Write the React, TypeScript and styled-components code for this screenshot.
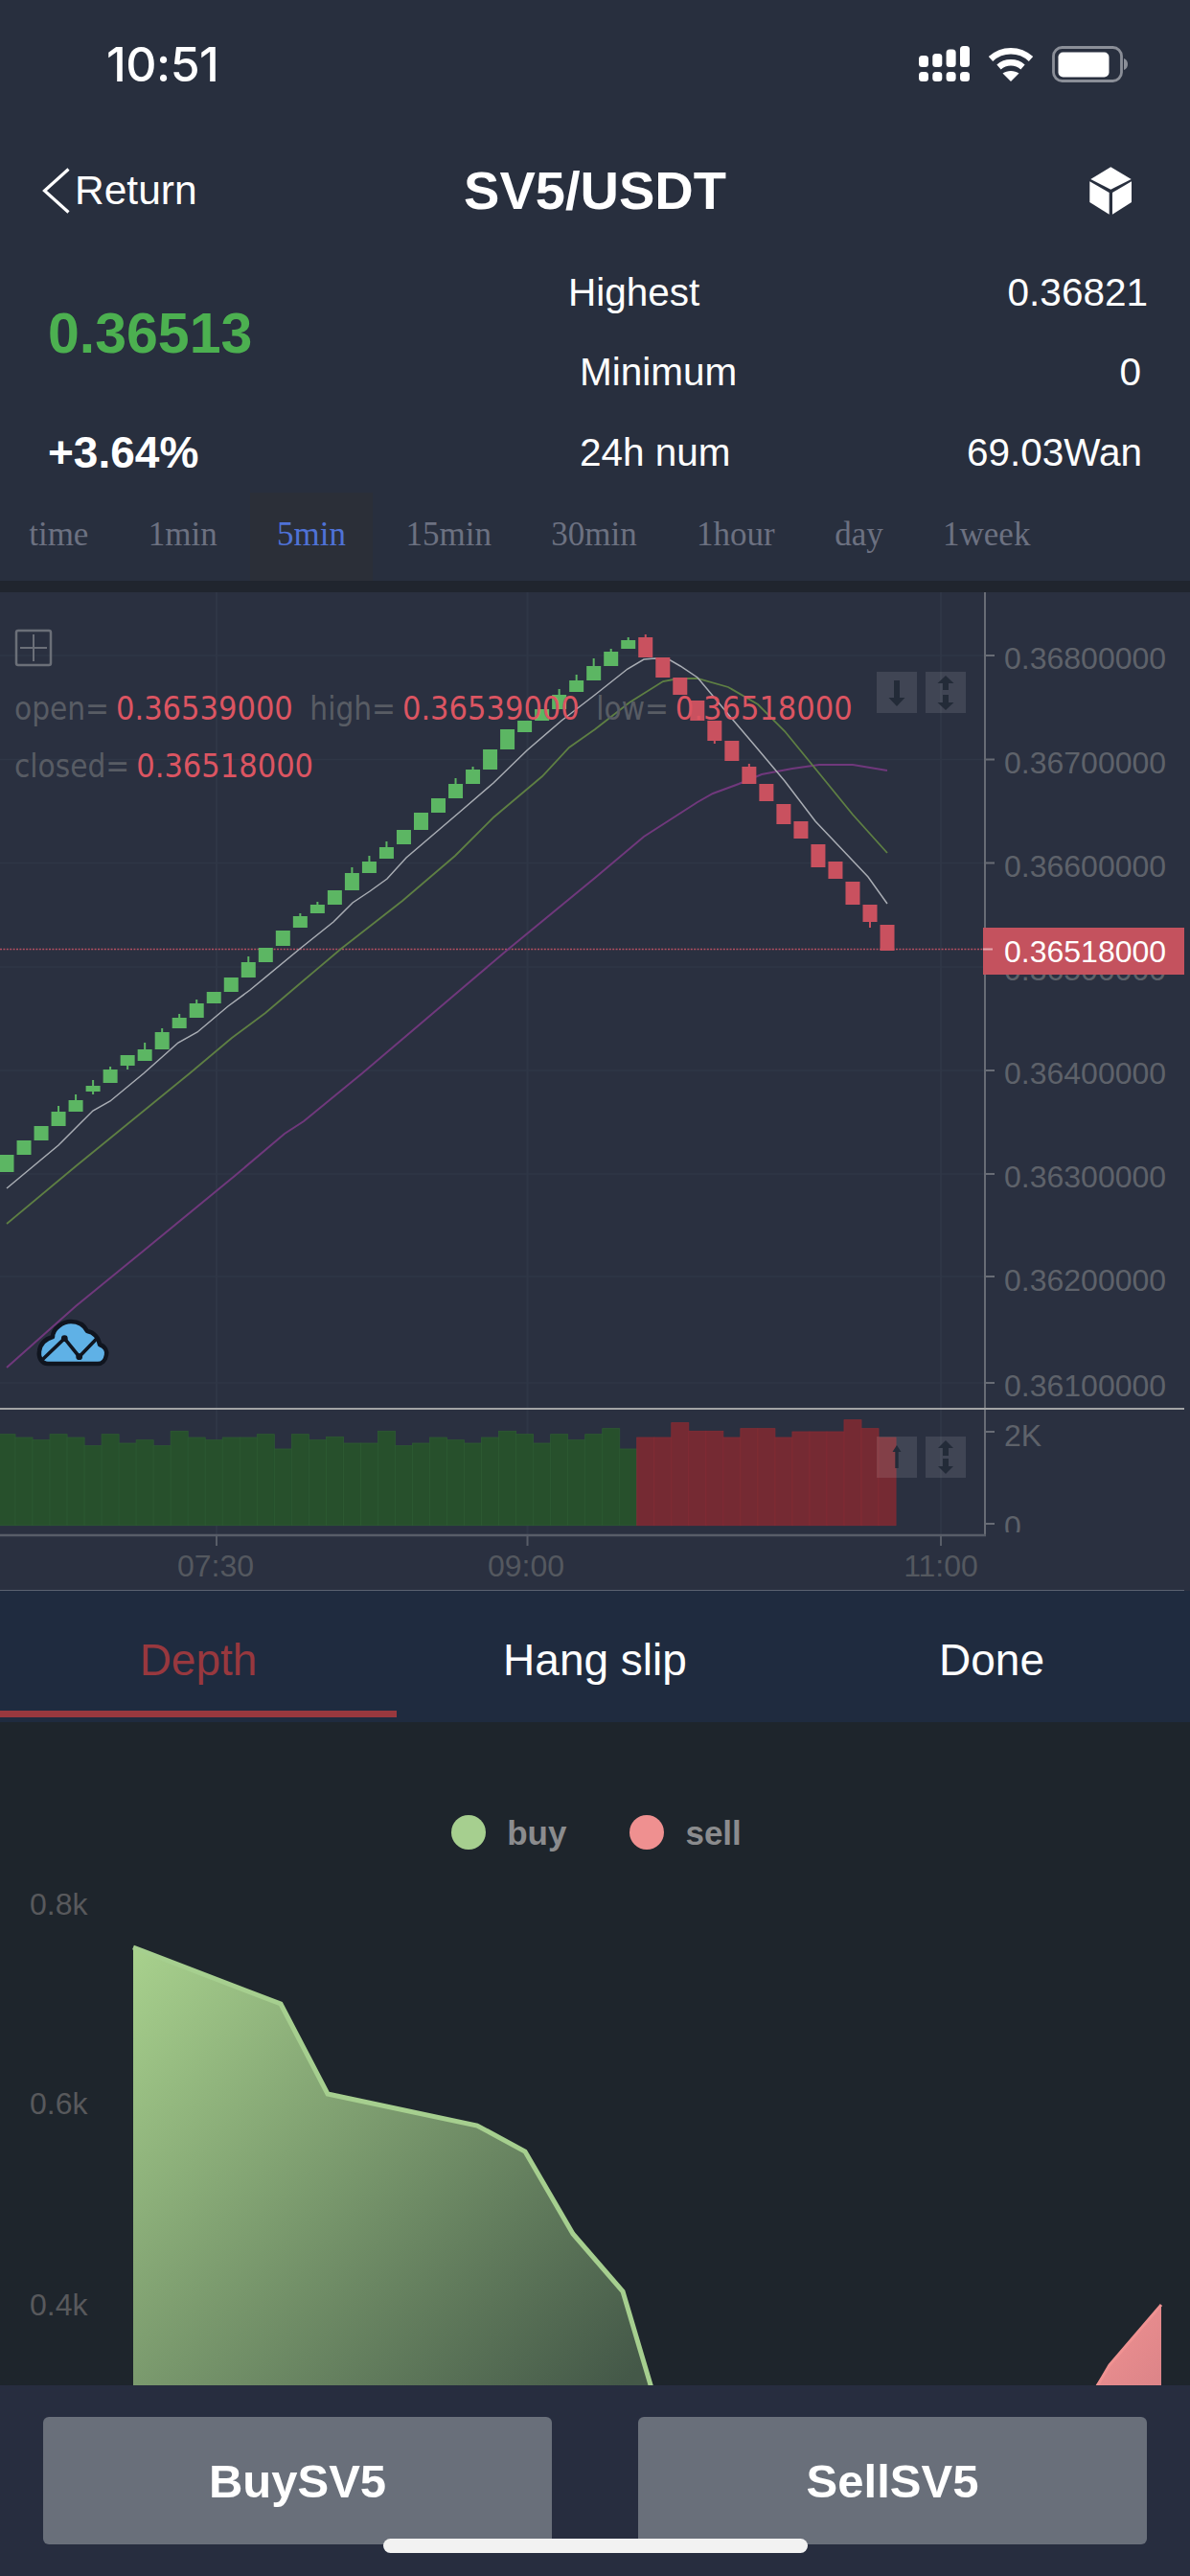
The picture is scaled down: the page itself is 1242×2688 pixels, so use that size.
import React from "react";
import styled, { createGlobalStyle } from "styled-components";

const GlobalStyle = createGlobalStyle`
  html, body { margin: 0; padding: 0; background: #282f3e; }
  * { box-sizing: border-box; }
`;

const Page = styled.div`
  position: relative;
  width: 1242px;
  height: 2688px;
  overflow: hidden;
  display: flex;
  flex-direction: column;
  background: #282f3e;
  color: #fff;
  font-family: "Liberation Sans", Arial, sans-serif;
`;

const Header = styled.header`
  height: 606px;
  flex: none;
  display: flex;
  flex-direction: column;
`;

const StatusBar = styled.div`
  height: 134px;
  flex: none;
  display: flex;
  align-items: center;
  justify-content: space-between;
  padding: 0 65px 0 111px;
`;

const Clock = styled.span`
  font-family: Inter, "Liberation Sans", sans-serif;
  font-size: 50px;
  font-weight: 500;
  letter-spacing: -0.5px;
`;

const StatusIcons = styled.div`
  display: flex;
  align-items: center;
  gap: 19px;
`;

const NavBar = styled.nav`
  height: 130px;
  flex: none;
  display: grid;
  grid-template-columns: 1fr auto 1fr;
  align-items: center;
`;

const BackLink = styled.a`
  display: flex;
  align-items: center;
  gap: 5px;
  padding-left: 44px;
  font-size: 42.5px;
  color: #fff;
`;

const Title = styled.h1`
  margin: 0 0 2px;
  font-size: 56px;
  font-weight: 700;
`;

const NavAction = styled.div`
  display: flex;
  justify-content: flex-end;
  padding-right: 59px;
`;

const Stats = styled.section`
  height: 250px;
  flex: none;
  display: flex;
`;

const Ticker = styled.div`
  width: 593px;
  flex: none;
  padding-left: 50px;
  display: flex;
  flex-direction: column;
`;

const LastPrice = styled.div`
  height: 167px;
  display: flex;
  align-items: center;
  font-size: 59px;
  font-weight: 700;
  color: #4cb050;
`;

const Change = styled.div`
  height: 81px;
  display: flex;
  align-items: center;
  font-size: 46px;
  font-weight: 700;
`;

const StatList = styled.div`
  flex: 1;
  display: flex;
  flex-direction: column;
  padding-right: 44px;
`;

const StatRow = styled.div<{ $indent: number; $inset: number }>`
  height: 83.4px;
  display: flex;
  align-items: center;
  justify-content: space-between;
  font-size: 40.5px;
  padding-left: ${(p) => p.$indent}px;
  padding-right: ${(p) => p.$inset}px;
`;

const PeriodStrip = styled.div`
  height: 92px;
  flex: none;
  display: flex;
  gap: 6px;
  padding-left: 2px;
`;

const Period = styled.div<{ $active?: boolean }>`
  display: flex;
  align-items: center;
  padding: 0 28.2px 4px;
  font-family: "Liberation Serif", "Times New Roman", serif;
  font-size: 35px;
  color: ${(p) => (p.$active ? "#4f72d6" : "#6c7181")};
  background: ${(p) => (p.$active ? "#2b2f38" : "transparent")};
`;

const Band = styled.div`
  height: 12px;
  flex: none;
  background: #20252e;
`;

const ChartPanel = styled.section`
  position: relative;
  height: 1042px;
  flex: none;
  background: #2a3040;
`;

const ChartSvg = styled.svg`
  display: block;
  width: 1242px;
  height: 1042px;
`;

const Readout = styled.div`
  position: absolute;
  left: 15px;
  top: 99px;
  display: flex;
  flex-direction: column;
  gap: 15px;
  font-family: "DejaVu Sans", Verdana, sans-serif;
  font-stretch: condensed;
  font-size: 34px;
  line-height: 45px;
  white-space: nowrap;
`;

const ReadoutRow = styled.div`
  display: flex;
`;

const ReadoutLabel = styled.span`
  color: #585c64;
  font-size: 33px;
  margin-right: 7px;
`;

const ReadoutValue = styled.span`
  color: #dc5562;
  margin-right: 17.5px;
`;

const TabBar = styled.div`
  height: 137px;
  flex: none;
  display: flex;
  padding-bottom: 5px;
  background: #1f2b3f;
`;

const Tab = styled.div<{ $active?: boolean }>`
  flex: 1;
  height: 132px;
  padding-top: 19px;
  display: flex;
  align-items: center;
  justify-content: center;
  font-size: 46px;
  color: ${(p) => (p.$active ? "#98383e" : "#fff")};
  border-bottom: 7px solid ${(p) => (p.$active ? "#98383e" : "transparent")};
`;

const DepthPanel = styled.section`
  height: 692px;
  flex: none;
  overflow: hidden;
  background: #1e252c;
  display: flex;
  flex-direction: column;
`;

const Legend = styled.div`
  flex: none;
  height: 36px;
  margin-top: 97px;
  display: flex;
  justify-content: center;
  align-items: center;
  gap: 66px;
  padding-left: 3px;
`;

const LegendItem = styled.div`
  display: flex;
  align-items: center;
  gap: 22px;
  font-size: 35px;
  font-weight: 700;
  line-height: 39px;
  color: #8b8c8e;
`;

const LegendDot = styled.span<{ $color: string }>`
  width: 36px;
  height: 36px;
  border-radius: 50%;
  background: ${(p) => p.$color};
`;

const DepthSvg = styled.svg`
  display: block;
  width: 1242px;
  height: 559px;
  flex: none;
`;

const ActionBar = styled.footer`
  flex: 1;
  display: flex;
  gap: 90px;
  padding: 33px 45px 0;
  background: #272d3f;
`;

const ActionButton = styled.button`
  flex: 1;
  height: 133px;
  border: 0;
  border-radius: 6px;
  background: #696f7a;
  color: #fff;
  font-family: inherit;
  font-size: 49px;
  font-weight: 700;
`;

const HomeIndicator = styled.div`
  position: absolute;
  left: 400px;
  top: 2649px;
  width: 443px;
  height: 15px;
  border-radius: 8px;
  background: #f2f2f2;
`;

const AXIS_FONT = '"Liberation Sans", Arial, sans-serif';

/* [bodyTop, bodyBottom, wickTop, wickBottom] */
type C = [number, number, number?, number?];
const candles: C[] = [
  [1205, 1223], [1190, 1205], [1175, 1190], [1160, 1175, 1154], [1148, 1160, 1142],
  [1133, 1139, 1127, 1142], [1116, 1130, 1113], [1101, 1112, undefined, 1116], [1095, 1107, 1088], [1077, 1095, 1073],
  [1062, 1073, 1058], [1047, 1062, 1043], [1035, 1047], [1020, 1035], [1004, 1020, 998],
  [989, 1004], [971, 987], [956, 968, 953], [944, 953, 941], [929, 944],
  [911, 929, 905], [899, 911, 893], [884, 896, 878], [866, 881], [848, 866],
  [833, 848], [818, 833, 812], [803, 818, 800], [782, 803], [761, 782],
  [752, 764], [740, 752], [725, 740, 719], [710, 722, 704], [695, 710, 687],
  [680, 695, 677], [668, 677, 665],
  [665, 686, 662], [686, 707], [707, 725], [731, 752], [752, 773, undefined, 776],
  [773, 794], [800, 818, 797], [818, 836], [839, 860], [857, 875],
  [881, 905], [899, 917], [920, 944], [944, 962, undefined, 968], [965, 992],
];
const FIRST_RED = 37;
const cx = (i: number) => 7 + 18.02 * i;

const white = "7,1240 61,1195 79,1177 97,1159 115,1149 150,1120 186,1088 206,1077 238,1050 261,1033 313,990 348,962 368,942 386,930 404,917 424,895 479,848 515,817 550,783 586,752 621,725 655,698 672,688 684,687 698,688 710,695 728,707 764,750 787,777 819,815 851,857 870,877 906,915 926,943";
const green = "7,1277 79,1217 198,1120 242,1083 277,1057 317,1023 356,990 420,940 475,893 515,853 566,810 594,780 621,761 657,733 692,711 708,708 728,708 760,717 791,735 819,763 855,807 890,850 926,890";
const purple = "7,1427 79,1363 150,1305 245,1227 297,1183 317,1170 378,1120 531,990 621,916 672,873 728,837 744,828 771,818 795,808 827,802 855,798 890,798 926,804";

/* bar tops, in thirds of a pixel below the pane origin at y = 1120 */
const volumeTops = [
  1130, 1140, 1148, 1130, 1140, 1166, 1130, 1158, 1148, 1166, 1120, 1140, 1148, 1140, 1140, 1130, 1176, 1130,
  1148, 1138, 1158, 1158, 1120, 1166, 1158, 1140, 1148, 1158, 1140, 1120, 1130, 1158, 1130, 1148, 1130, 1112, 1176,
  1140, 1140, 1094, 1120, 1120, 1140, 1112, 1112, 1140, 1122, 1122, 1122, 1085, 1112, 1140,
];
const volumeBase = 1591.7;
const volumeY = (v: number) => 1120 + v / 3;

const priceTicks = [
  { y: 684, label: "0.36800000", ly: 686 },
  { y: 792.5, label: "0.36700000", ly: 795 },
  { y: 900.5, label: "0.36600000", ly: 903 },
  { y: 1009, label: "0.36500000", ly: 1011 },
  { y: 1117, label: "0.36400000", ly: 1119 },
  { y: 1225, label: "0.36300000", ly: 1227 },
  { y: 1332, label: "0.36200000", ly: 1335 },
  { y: 1443, label: "0.36100000", ly: 1445 },
];
const timeTicks = [
  { x: 226, label: "07:30", lx: 225 },
  { x: 550.5, label: "09:00", lx: 549 },
  { x: 982, label: "11:00", lx: 982 },
];

const ArrowBox = ({ x, y }: { x: number; y: number }) => (
  <rect x={x} y={y} width={42} height={43} fill="#fff" fillOpacity={0.105} />
);

const KlineChart = () => (
  <ChartSvg viewBox="0 618 1242 1042">
    <defs>
      <clipPath id="volClip"><rect x="0" y="1472" width="1242" height="127" /></clipPath>
    </defs>
    {priceTicks.map((t) => (
      <line key={t.y} x1="0" x2="1028" y1={t.y} y2={t.y} stroke="#2f3646" strokeWidth="1.5" />
    ))}
    {timeTicks.map((t) => (
      <line key={t.x} x1={t.x} x2={t.x} y1="618" y2="1602" stroke="#2f3646" strokeWidth="2" />
    ))}

    {/* volume */}
    {volumeTops.map((v, i) => (
      <rect
        key={i}
        x={cx(i) - 9}
        y={volumeY(v)}
        width={18.02}
        height={volumeBase - volumeY(v)}
        fill={i >= FIRST_RED ? "#752a33" : "#27502c"}
        stroke={i >= FIRST_RED ? "#842c35" : "#2d5a32"}
        strokeWidth="0.8"
      />
    ))}

    {/* price line */}
    <line x1="0" x2="1028" y1="990.5" y2="990.5" stroke="#b44f62" strokeWidth="1.6" strokeDasharray="2 1.4" />

    {/* moving averages */}
    <polyline points={purple} fill="none" stroke="#70387c" strokeWidth="2" />
    <polyline points={green} fill="none" stroke="#5e7f43" strokeWidth="1.8" />
    <polyline points={white} fill="none" stroke="#a9adb4" strokeWidth="1.5" />

    {/* candles */}
    {candles.map(([a, b, wt, wb], i) => {
      const color = i >= FIRST_RED ? "#c9515f" : "#5cb663";
      return (
        <g key={i} fill={color}>
          {(wt !== undefined || wb !== undefined) && (
            <rect x={cx(i) - 1} width="2" y={wt ?? a} height={(wb ?? b) - (wt ?? a)} />
          )}
          <rect x={cx(i) - 7.5} width="15" y={a} height={b - a} />
        </g>
      );
    })}

    {/* axes */}
    <line x1="1028" x2="1028" y1="618" y2="1603" stroke="#686c75" strokeWidth="2" />
    <line x1="0" x2="1029" y1="1602" y2="1602" stroke="#585d68" strokeWidth="2.5" />
    <line x1="0" x2="1236" y1="1470" y2="1470" stroke="#a2a3a5" strokeWidth="2" />
    <line x1="0" x2="1236" y1="1659.5" y2="1659.5" stroke="#5b6270" strokeWidth="1" />

    {priceTicks.map((t) => (
      <g key={t.label}>
        <line x1="1028" x2="1038" y1={t.y} y2={t.y} stroke="#686c75" strokeWidth="2" />
        <text x="1048" y={t.ly + 11.5} fontFamily={AXIS_FONT} fontSize="32" fill="#5e626a">{t.label}</text>
      </g>
    ))}
    <line x1="1028" x2="1038" y1="1494" y2="1494" stroke="#686c75" strokeWidth="2" />
    <line x1="1028" x2="1038" y1="1590" y2="1590" stroke="#686c75" strokeWidth="2" />
    <text x="1048" y="1508.5" fontFamily={AXIS_FONT} fontSize="32" fill="#5e626a">2K</text>
    <g clipPath="url(#volClip)">
      <text x="1048" y="1604" fontFamily={AXIS_FONT} fontSize="32" fill="#5e626a">0</text>
    </g>

    {timeTicks.map((t) => (
      <g key={t.label}>
        <line x1={t.x} x2={t.x} y1="1602" y2="1613" stroke="#585d68" strokeWidth="2" />
        <text x={t.lx} y="1645" textAnchor="middle" fontFamily={AXIS_FONT} fontSize="32" fill="#54585f">{t.label}</text>
      </g>
    ))}

    {/* current price tag */}
    <rect x="1026" y="968" width="210" height="49" fill="#c4525e" />
    <line x1="1026" x2="1036" y1="990.5" y2="990.5" stroke="#e4a6ac" strokeWidth="2" />
    <text x="1048" y="1004" fontFamily={AXIS_FONT} fontSize="32" fill="#fff">0.36518000</text>

    {/* crosshair toggle */}
    <rect x="17" y="658" width="36" height="36" rx="2" fill="none" stroke="#6b6f78" strokeWidth="2.5" />
    <path d="M21 676H49M35 662V690" stroke="#6b6f78" strokeWidth="2" fill="none" />

    {/* scale buttons: price pane */}
    <ArrowBox x={915} y={701} />
    <ArrowBox x={966} y={701} />
    <path d="M933 710h6v18h5.500l-8.500 9-8.500-9h5.500z" fill="#232b38" />
    <path d="M987 705l8.500 8h-5.500v7h-6v-7h-5.500zM984 725h6v8h5.500l-8.500 8-8.500-8h5.500z" fill="#232b38" />

    {/* scale buttons: volume pane */}
    <ArrowBox x={915} y={1499} />
    <ArrowBox x={966} y={1499} />
    <path d="M936 1508l4.500 7h-2.800v17h-3.400v-17h-2.800z" fill="#232b38" />
    <path d="M987 1503l8 8h-5v8h-6v-8h-5zM984 1522h6v8h5l-8 8-8-8h5z" fill="#232b38" />

    {/* cloud badge */}
    <path
      d="M50 1423C43 1423 40 1416 41 1410C42 1402 48 1397 55 1395C55 1386 66 1379 74 1379C82 1379 88 1383 91 1389C98 1390 103 1396 104 1403C110 1405 112 1410 111 1414C110 1420 106 1423 102 1423Z"
      fill="#5fb1e6"
      stroke="#10151f"
      strokeWidth="4.500"
      strokeLinejoin="round"
    />
    <polyline points="44,1419 67.300,1396.700 82.700,1415.700 101.700,1396" fill="none" stroke="#10151f" strokeWidth="3.600" />
    <circle cx="67.300" cy="1396.700" r="3.400" fill="#10151f" />
    <circle cx="82.700" cy="1415.700" r="3.400" fill="#10151f" />
  </ChartSvg>
);

const DepthChart = () => {
  const line = "139,2032 293,2091 342,2185 498,2218 548,2245 598,2331 650,2391 680,2492";
  return (
    <DepthSvg viewBox="0 1930 1242 559">
      <defs>
        <linearGradient id="buyFill" gradientUnits="userSpaceOnUse" x1="139" y1="2032" x2="640" y2="2500">
          <stop offset="0" stopColor="#a8d18d" />
          <stop offset="1" stopColor="#445848" />
        </linearGradient>
        <linearGradient id="sellFill" x1="0" y1="0" x2="1" y2="1">
          <stop offset="0" stopColor="#f09292" />
          <stop offset="1" stopColor="#dc8488" />
        </linearGradient>
      </defs>
      <polygon points={`${line} 139,2492`} fill="url(#buyFill)" />
      <polyline points={line} fill="none" stroke="#a6cf8f" strokeWidth="5" />
      <path d="M1212 2405V2490H1143L1158 2468Z" fill="url(#sellFill)" />
      <path d="M1145 2490L1158 2468L1212 2405" fill="none" stroke="#f09292" strokeWidth="3" />
      <text x="31" y="1998" fontFamily={AXIS_FONT} fontSize="32" fill="#58595c">0.8k</text>
      <text x="31" y="2205.500" fontFamily={AXIS_FONT} fontSize="32" fill="#58595c">0.6k</text>
      <text x="31" y="2415.500" fontFamily={AXIS_FONT} fontSize="32" fill="#58595c">0.4k</text>
    </DepthSvg>
  );
};

const SignalIcon = () => (
  <svg width="53" height="38" viewBox="0 0 53 38" fill="#fff">
    <rect x="0" y="10" width="10" height="12" rx="3.500" />
    <rect x="14.300" y="8" width="10" height="14" rx="3.500" />
    <rect x="28.600" y="3.500" width="10" height="18.500" rx="3.500" />
    <rect x="43" y="0" width="10" height="22" rx="3.500" />
    <rect x="0" y="27" width="10" height="10" rx="3.500" />
    <rect x="14.300" y="27" width="10" height="10" rx="3.500" />
    <rect x="28.600" y="27" width="10" height="10" rx="3.500" />
    <rect x="43" y="27" width="10" height="10" rx="3.500" />
  </svg>
);

const WifiIcon = () => (
  <svg width="48" height="36" viewBox="0 0 48 36" fill="none" stroke="#fff">
    <path d="M3 12.500C15 1.500 33 1.500 45 12.500" strokeWidth="6.500" />
    <path d="M11.500 21C18.500 14.800 29.500 14.800 36.500 21" strokeWidth="6.500" />
    <path d="M24 36L15.500 27.500C20 24 28 24 32.500 27.500Z" fill="#fff" stroke="none" />
  </svg>
);

const BatteryIcon = () => (
  <svg width="79" height="38" viewBox="0 0 79 38">
    <rect x="1.500" y="1.500" width="71" height="35" rx="9" fill="none" stroke="#8b8f98" strokeWidth="2.800" />
    <rect x="6.500" y="6.500" width="53" height="26" rx="5" fill="#fff" />
    <path d="M75 13C78 14 79 16.500 79 19S78 24 75 25Z" fill="#8b8f98" />
  </svg>
);

const BackChevron = () => (
  <svg width="29" height="48" viewBox="0 0 29 48" fill="none" stroke="#fff" strokeWidth="3.200">
    <path d="M27.500 1.500L2.500 24L27.500 46.500" />
  </svg>
);

const CubeIcon = () => (
  <svg width="46" height="50" viewBox="1137 173 46 50" fill="#fff">
    <polygon points="1159.300,173.300 1180.700,186 1159.300,196.700 1138.300,186" />
    <polygon points="1137.300,188.300 1157.700,200 1157.700,222.700 1137.300,210" />
    <polygon points="1161,200 1181,188.300 1181,210 1161,222.700" />
  </svg>
);

const periods = ["time", "1min", "5min", "15min", "30min", "1hour", "day", "1week"];

export default function App() {
  return (
    <Page>
      <GlobalStyle />
      <Header>
        <StatusBar>
          <Clock>10:51</Clock>
          <StatusIcons>
            <SignalIcon />
            <WifiIcon />
            <BatteryIcon />
          </StatusIcons>
        </StatusBar>
        <NavBar>
          <BackLink>
            <BackChevron />
            Return
          </BackLink>
          <Title>SV5/USDT</Title>
          <NavAction>
            <CubeIcon />
          </NavAction>
        </NavBar>
        <Stats>
          <Ticker>
            <LastPrice>0.36513</LastPrice>
            <Change>+3.64%</Change>
          </Ticker>
          <StatList>
            <StatRow $indent={0} $inset={0}>
              <span>Highest</span>
              <span>0.36821</span>
            </StatRow>
            <StatRow $indent={12} $inset={7}>
              <span>Minimum</span>
              <span>0</span>
            </StatRow>
            <StatRow $indent={12} $inset={6}>
              <span>24h num</span>
              <span>69.03Wan</span>
            </StatRow>
          </StatList>
        </Stats>
        <PeriodStrip>
          {periods.map((p) => (
            <Period key={p} $active={p === "5min"}>{p}</Period>
          ))}
        </PeriodStrip>
      </Header>
      <Band />
      <ChartPanel>
        <KlineChart />
        <Readout>
          <ReadoutRow>
            <ReadoutLabel>open=</ReadoutLabel>
            <ReadoutValue>0.36539000</ReadoutValue>
            <ReadoutLabel>high=</ReadoutLabel>
            <ReadoutValue>0.36539000</ReadoutValue>
            <ReadoutLabel>low=</ReadoutLabel>
            <ReadoutValue>0.36518000</ReadoutValue>
          </ReadoutRow>
          <ReadoutRow>
            <ReadoutLabel>closed=</ReadoutLabel>
            <ReadoutValue>0.36518000</ReadoutValue>
          </ReadoutRow>
        </Readout>
      </ChartPanel>
      <TabBar>
        <Tab $active>Depth</Tab>
        <Tab>Hang slip</Tab>
        <Tab>Done</Tab>
      </TabBar>
      <DepthPanel>
        <Legend>
          <LegendItem>
            <LegendDot $color="#a6cf8f" />
            buy
          </LegendItem>
          <LegendItem>
            <LegendDot $color="#ef9090" />
            sell
          </LegendItem>
        </Legend>
        <DepthChart />
      </DepthPanel>
      <ActionBar>
        <ActionButton>BuySV5</ActionButton>
        <ActionButton>SellSV5</ActionButton>
      </ActionBar>
      <HomeIndicator />
    </Page>
  );
}
